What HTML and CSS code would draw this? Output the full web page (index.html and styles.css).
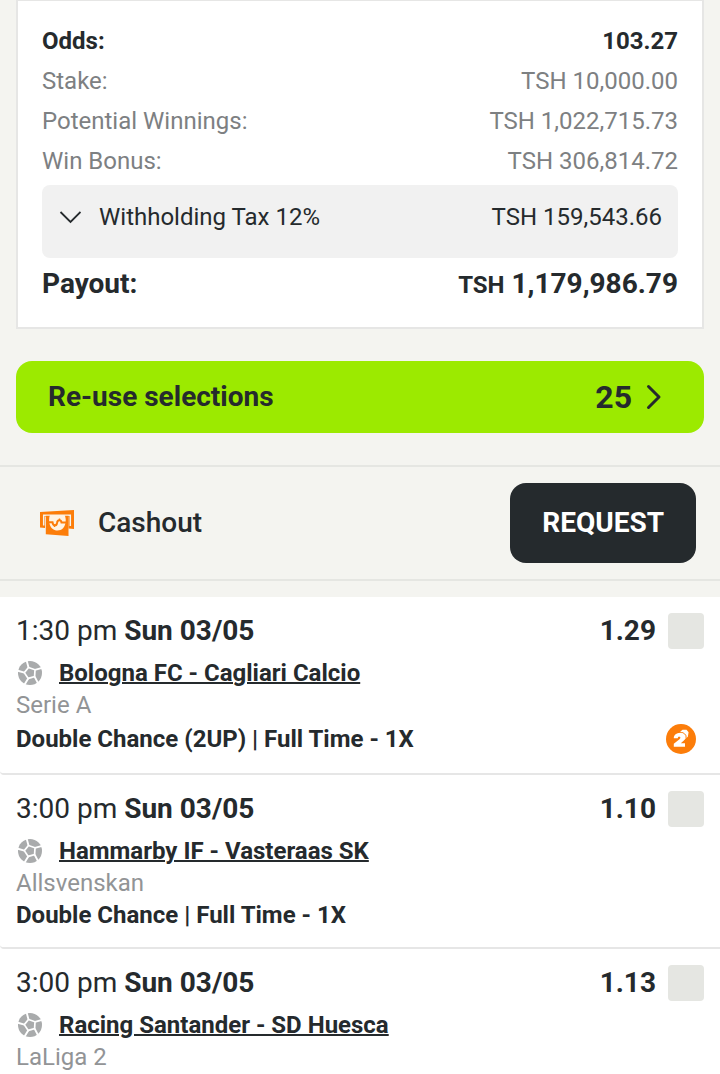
FILE: index.html
```html
<!DOCTYPE html>
<html lang="en">
<head>
<meta charset="utf-8">
<meta name="viewport" content="width=device-width, initial-scale=1">
<title>Bet details</title>
<link rel="stylesheet" href="styles.css">
</head>
<body>
<svg class="defs" aria-hidden="true">
  <symbol id="ball" viewBox="0 0 26 26">
    <circle cx="13" cy="13" r="12" fill="#a9abac"/>
    <path d="M11.500 7.500 18 9.800 17.600 16.600 11.200 18.400 7.300 12.600Z" fill="#a9abac" stroke="#fff" stroke-width="1.700"/>
    <path d="M11.500 7.500 9.500 0M18 9.800 26 7.600M17.600 16.600 21.500 24M11.200 18.400 7 25.500M7.300 12.600 0 10.500" fill="none" stroke="#fff" stroke-width="1.900"/>
  </symbol>
</svg>
<main>
  <section class="slip">
    <dl class="card">
      <div class="row strong"><dt>Odds:</dt><dd>103.27</dd></div>
      <div class="row"><dt>Stake:</dt><dd>TSH 10,000.00</dd></div>
      <div class="row"><dt>Potential Winnings:</dt><dd>TSH 1,022,715.73</dd></div>
      <div class="row"><dt>Win Bonus:</dt><dd>TSH 306,814.72</dd></div>
      <div class="row tax">
        <dt><svg width="22" height="14" viewBox="0 0 22 14" aria-hidden="true"><path d="M1.500 2 11.500 12 21.500 2" fill="none" stroke="#252a2d" stroke-width="1.800"/></svg>Withholding Tax 12%</dt>
        <dd>TSH 159,543.66</dd>
      </div>
      <div class="row payout"><dt>Payout:</dt><dd><span class="currency">TSH</span> 1,179,986.79</dd></div>
    </dl>
    <button class="reuse" type="button">
      <span>Re-use selections</span>
      <span class="count">25<svg width="16" height="26" viewBox="0 0 16 26" aria-hidden="true"><path d="M2.500 2.500 13 13 2.500 23.500" fill="none" stroke="#252a2d" stroke-width="3" stroke-linecap="round" stroke-linejoin="round"/></svg></span>
    </button>
  </section>

  <section class="cashout">
    <svg width="36" height="28" viewBox="0 0 36 28" aria-hidden="true">
      <path d="M1 3 35 1V20L29.500 19.500V7.500H6V19L1 18.500Z" fill="#fc7d0a"/>
      <path d="M4.700 16.500V6.200H31.300V17" fill="none" stroke="#f4f4f0" stroke-width="1.500"/>
      <path d="M6.800 6.800H29.500V27L6.800 25.200Z" fill="#fc7d0a"/>
      <path d="M11 6H25.500C28 10 27 21.500 18.500 21.500S9 11 11 6Z" fill="#fff3e4"/>
      <path d="M10 13.200H13.500C14 17.500 17.500 17 18 14C18.500 10.500 22 10.500 22.500 13.500H27" fill="none" stroke="#fc7d0a" stroke-width="2"/>
      <path d="M15.500 15.500V18M20.500 9.500V12" stroke="#fc7d0a" stroke-width="1.400"/>
    </svg>
    <h2>Cashout</h2>
    <button class="request" type="button">REQUEST</button>
  </section>

  <ul class="bets">
    <li class="bet">
      <div class="head"><span class="time">1:30 pm <b>Sun 03/05</b></span><b class="odd">1.29</b><input type="checkbox" aria-label="Select Bologna FC - Cagliari Calcio"></div>
      <div class="match"><svg class="ball" aria-hidden="true"><use href="#ball"/></svg><a href="#">Bologna FC - Cagliari Calcio</a></div>
      <div class="league">Serie A</div>
      <div class="market promo"><span>Double Chance (2UP) | Full Time - 1X</span>
        <svg class="two-up" width="30" height="30" viewBox="0 0 30 30" role="img" aria-label="2UP">
          <circle cx="15" cy="15" r="15" fill="#fc7d0a"/>
          <path d="M13.500 8.500 16.500 5.800H20.500L22.600 8.200 21.800 12.800 18 16 13 12Z" fill="#fff"/>
          <path d="M12.500 8.700H17L20 11.300V14.500" fill="none" stroke="#fc7d0a" stroke-width="1"/>
          <path d="M7.800 14.300C7.500 7.500 19.200 7.200 19.200 13.300C19.200 15.800 17.200 17.300 14.800 19.200H19V22.800H7.800V19.800L13.500 15.200C14.800 14 14.800 12.500 13.300 12.500C12.200 12.500 11.900 13.300 11.800 14.300Z" fill="#fff"/>
        </svg>
      </div>
    </li>
    <li class="bet">
      <div class="head"><span class="time">3:00 pm <b>Sun 03/05</b></span><b class="odd">1.10</b><input type="checkbox" aria-label="Select Hammarby IF - Vasteraas SK"></div>
      <div class="match"><svg class="ball" aria-hidden="true"><use href="#ball"/></svg><a href="#">Hammarby IF - Vasteraas SK</a></div>
      <div class="league">Allsvenskan</div>
      <div class="market">Double Chance | Full Time - 1X</div>
    </li>
    <li class="bet">
      <div class="head"><span class="time">3:00 pm <b>Sun 03/05</b></span><b class="odd">1.13</b><input type="checkbox" aria-label="Select Racing Santander - SD Huesca"></div>
      <div class="match"><svg class="ball" aria-hidden="true"><use href="#ball"/></svg><a href="#">Racing Santander - SD Huesca</a></div>
      <div class="league">LaLiga 2</div>
    </li>
  </ul>
</main>
</body>
</html>
```
FILE: styles.css
```css
* { box-sizing: border-box; }
body {
  margin: 0;
  background: #f4f4f0;
  color: #252a2d;
  font: 24px/32px Roboto, "Liberation Sans", sans-serif;
}
.defs { display: none; }
svg { flex: none; }
button { border: 0; color: inherit; font: inherit; cursor: pointer; }

.slip { padding: 0 16px 32px; }
.card {
  margin: 0 0 32px;
  padding: 20px 24px 22px;
  background: #fff;
  border: 2px solid #e6e6e5;
  border-top-width: 1px;
}
.row {
  display: flex;
  justify-content: space-between;
  line-height: 40px;
  color: #7d8082;
}
.row dd { margin: 0; }
.strong { color: #252a2d; font-weight: 700; }
.tax {
  margin: 4px 0 6px;
  padding: 12px 16px 21px;
  border-radius: 8px;
  background: #f1f1f1;
  color: #252a2d;
}
.tax dt { display: flex; align-items: center; gap: 18px; }
.tax svg { margin-left: 1px; }
.payout { color: #252a2d; font-size: 28px; font-weight: 700; }
.currency { font-size: 24px; }

.reuse {
  display: flex;
  justify-content: space-between;
  align-items: center;
  width: 100%;
  padding: 16px 42px 16px 32px;
  border-radius: 16px;
  background: #9cea00;
  font-size: 28px;
  font-weight: 700;
  line-height: 40px;
}
.count { display: flex; align-items: center; gap: 14px; font-size: 32px; }

.cashout {
  display: flex;
  align-items: center;
  margin-bottom: 16px;
  padding: 16px 24px 16px 39px;
  border: solid #e5e6e2;
  border-width: 2px 0;
}
.cashout h2 { flex: 1; margin: 0 0 0 23px; font-size: 28px; font-weight: 500; }
.request {
  padding: 20px 32px;
  border-radius: 16px;
  background: #252a2d;
  color: #fff;
  font-size: 28px;
  font-weight: 700;
  line-height: 40px;
}

.bets { margin: 0; padding: 0; list-style: none; background: #fff; }
.bet { padding: 16px; border-bottom: 2px solid #e6e6e6; border-bottom-left-radius: 4px; }
.bet:last-child { border-bottom: 0; padding-bottom: 1px; }
.head { display: flex; align-items: center; margin-bottom: 8px; font-size: 28px; line-height: 36px; }
.time { flex: 1; }
.head input {
  appearance: none;
  width: 36px;
  height: 36px;
  margin: 0 0 0 12px;
  border-radius: 4px;
  background: #e5e6e2;
}
.match { display: flex; align-items: center; gap: 15px; }
.ball { width: 28px; height: 26px; }
.match a { color: inherit; font-weight: 700; text-decoration-thickness: 2px; }
.league { color: #929496; }
.market { font-weight: 700; }
.promo { display: flex; align-items: center; justify-content: space-between; padding-right: 8px; line-height: 36px; }
```
